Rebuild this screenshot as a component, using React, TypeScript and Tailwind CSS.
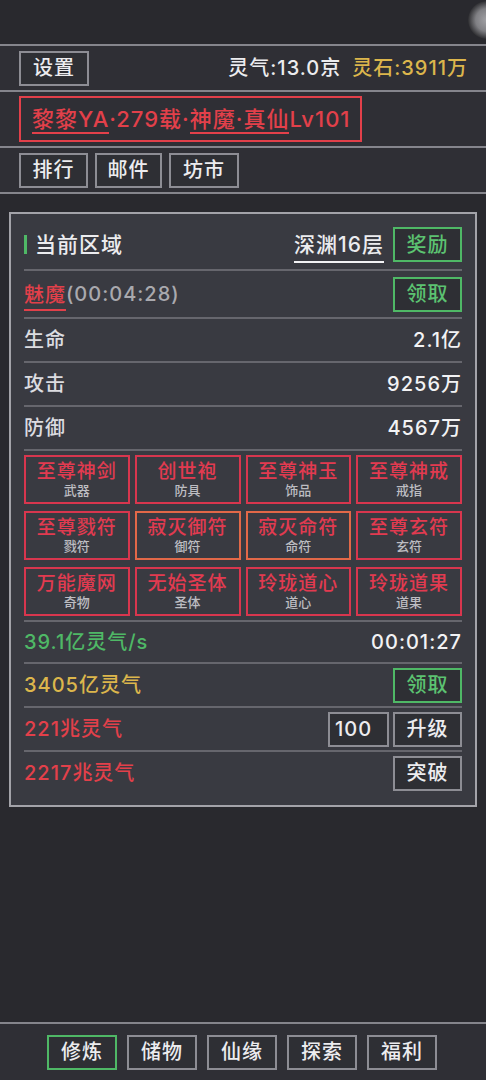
import type { ReactNode } from 'react';

const FONT = { fontFamily: 'Inter, "Noto Sans CJK SC", sans-serif' };

const GEAR = [
  { name: '至尊神剑', type: '武器', orange: false },
  { name: '创世袍', type: '防具', orange: false },
  { name: '至尊神玉', type: '饰品', orange: false },
  { name: '至尊神戒', type: '戒指', orange: false },
  { name: '至尊戮符', type: '戮符', orange: false },
  { name: '寂灭御符', type: '御符', orange: true },
  { name: '寂灭命符', type: '命符', orange: true },
  { name: '至尊玄符', type: '玄符', orange: false },
  { name: '万能魔网', type: '奇物', orange: false },
  { name: '无始圣体', type: '圣体', orange: false },
  { name: '玲珑道心', type: '道心', orange: false },
  { name: '玲珑道果', type: '道果', orange: false },
];

function Btn({ children, green, w = 'w-[69px]' }: { children: ReactNode; green?: boolean; w?: string }) {
  return (
    <div
      className={`${w} h-[35px] flex items-center justify-center border-2 text-[20px] leading-none bg-[#2e2f34] ${
        green ? 'border-[#4fb866] text-[#5cc271]' : 'border-[#8d8d94] text-[#ececef]'
      }`}
    >
      {children}
    </div>
  );
}

export default function App() {
  return (
    <div
      className="w-full min-h-[1080px] bg-[#29292e] flex flex-col text-[#ececef] font-medium tracking-[1px]"
      style={FONT}
    >
      {/* top strip */}
      <div className="h-[44px] relative overflow-hidden">
        <div className="absolute right-[-20px] top-[1px] w-[38px] h-[38px] rounded-full bg-[radial-gradient(circle,#a2a2a6_0%,#808084_42%,#2b2b2e_72%,#1b1b1e_100%)]" />
      </div>
      <div className="h-[2px] bg-[#85858c]" />

      {/* settings row */}
      <div className="h-[44px] bg-[#2f2f35] flex items-center justify-between pl-[19px] pr-[18px]">
        <Btn w="w-[70px]">设置</Btn>
        <div className="flex items-center gap-[11px] text-[20px] leading-none">
          <span className="text-[#ececef]">灵气:13.0京</span>
          <span className="text-[#dcb64c]">灵石:3911万</span>
        </div>
      </div>
      <div className="h-[2px] bg-[#85858c]" />

      {/* name row */}
      <div className="h-[54px] bg-[#2f2f35] flex items-center pl-[19px]">
        <div className="h-[46px] w-[343px] border-2 border-[#e2404a] flex items-center pl-[11px] text-[22px] leading-none text-[#e2404a] whitespace-nowrap">
          <span className="border-b-2 border-[#e2404a] pb-[2px] mt-[4px]">黎黎YA</span>
          <span>·279载·</span>
          <span className="border-b-2 border-[#e2404a] pb-[2px] mt-[4px]">神魔·真仙</span>
          <span>Lv101</span>
        </div>
      </div>
      <div className="h-[2px] bg-[#85858c]" />

      {/* menu row */}
      <div className="h-[44px] bg-[#2f2f35] flex items-center gap-[7px] pl-[19px]">
        <Btn>排行</Btn>
        <Btn w="w-[67px]">邮件</Btn>
        <Btn w="w-[70px]">坊市</Btn>
      </div>
      <div className="h-[2px] bg-[#85858c]" />

      {/* main panel */}
      <div className="mt-[18px] mx-[9px] border-2 border-[#a3a3a9] bg-[#393a41] px-[13px] pt-[6px] pb-[11px]">
        <div className="h-[49px] flex items-center justify-between">
          <div className="flex items-center gap-[8px]">
            <div className="w-[3px] h-[19px] bg-[#4fb866]" />
            <span className="text-[21px] leading-none">当前区域</span>
          </div>
          <div className="flex items-center gap-[9px]">
            <span className="text-[21px] leading-none border-b-2 border-[#f2f2f4] pb-[6px] mt-[8px]">深渊16层</span>
            <Btn green>奖励</Btn>
          </div>
        </div>

        <div className="h-[48px] border-t-2 border-[#66666d] flex items-center justify-between">
          <div className="flex items-center text-[20px] leading-none">
            <span className="text-[#e2404a] border-b-2 border-[#e2404a] pb-[4px] mt-[7px]">魅魔</span>
            <span className="text-[#a9a9ae]">(00:04:28)</span>
          </div>
          <Btn green>领取</Btn>
        </div>

        {[
          ['生命', '2.1亿'],
          ['攻击', '9256万'],
          ['防御', '4567万'],
        ].map(([k, v]) => (
          <div key={k} className="h-[44px] border-t-2 border-[#66666d] flex items-center justify-between text-[20px] leading-none">
            <span className="text-[#dcdce0]">{k}</span>
            <span className="text-[#f2f2f4]">{v}</span>
          </div>
        ))}

        <div className="border-t-2 border-[#66666d] py-[4px] grid grid-cols-4 gap-x-[5px] gap-y-[7px]">
          {GEAR.map((g) => (
            <div
              key={g.name}
              className={`h-[49px] border-2 flex flex-col items-center justify-center gap-[3px] ${
                g.orange ? 'border-[#e26848]' : 'border-[#d8364e]'
              }`}
            >
              <span className="text-[19px] leading-none text-[#e23a50]">{g.name}</span>
              <span className="text-[13px] leading-none text-[#bdbdc2] tracking-normal">{g.type}</span>
            </div>
          ))}
        </div>

        <div className="h-[42px] border-t-2 border-[#66666d] flex items-center justify-between text-[20px] leading-none">
          <span className="text-[#4fb866]">39.1亿灵气/s</span>
          <span className="text-[#f2f2f4]">00:01:27</span>
        </div>

        <div className="h-[44px] border-t-2 border-[#66666d] flex items-center justify-between text-[20px] leading-none">
          <span className="text-[#dcb64c]">3405亿灵气</span>
          <Btn green>领取</Btn>
        </div>

        <div className="h-[44px] border-t-2 border-[#66666d] flex items-center justify-between text-[20px] leading-none">
          <span className="text-[#e2404a]">221兆灵气</span>
          <div className="flex items-center gap-[4px]">
            <div className="w-[61px] h-[35px] border-2 border-[#8d8d94] bg-[#2e2f34] flex items-center pl-[5px] text-[20px]">100</div>
            <Btn>升级</Btn>
          </div>
        </div>

        <div className="h-[44px] border-t-2 border-[#66666d] flex items-center justify-between text-[20px] leading-none">
          <span className="text-[#e2404a]">2217兆灵气</span>
          <Btn>突破</Btn>
        </div>
      </div>

      <div className="flex-1" />

      {/* bottom nav */}
      <div className="h-[2px] bg-[#85858c]" />
      <div className="h-[56px] bg-[#2f2f35] flex items-center justify-center gap-[10px] pr-[2px]">
        <div className="w-[70px] h-[35px] flex items-center justify-center border-2 border-[#4fb866] text-[#ececef] text-[20px] leading-none bg-[#2e2f34]">
          修炼
        </div>
        <Btn w="w-[70px]">储物</Btn>
        <Btn w="w-[70px]">仙缘</Btn>
        <Btn w="w-[70px]">探索</Btn>
        <Btn w="w-[70px]">福利</Btn>
      </div>
    </div>
  );
}
